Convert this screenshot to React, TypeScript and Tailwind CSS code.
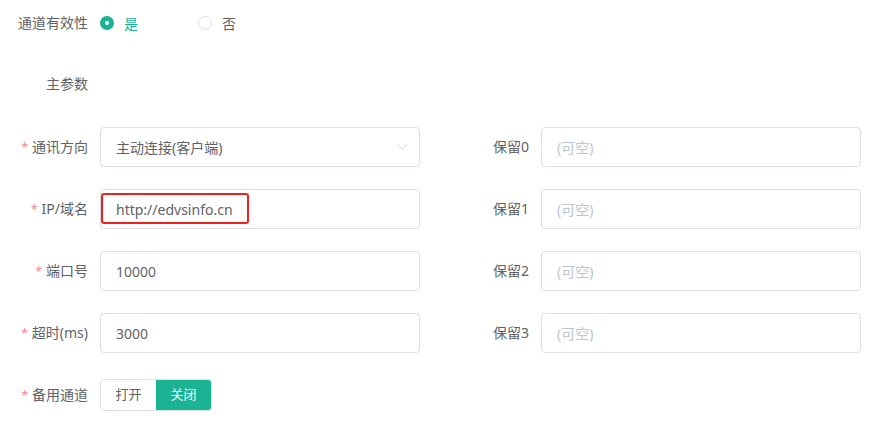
import { ChevronDown } from "lucide-react";

const font = { fontFamily: '"Noto Sans", "Noto Sans CJK SC", sans-serif' };

function Label({ text, required }: { text: string; required?: boolean }) {
  return (
    <div className="w-[100px] shrink-0 pr-3 text-right text-[14px] leading-5 text-[#606266]">
      {required && <span className="mr-[4px] text-[12px] text-[#f78989]">*</span>}
      {text}
    </div>
  );
}

function Field({ value, placeholder, highlight }: { value?: string; placeholder?: string; highlight?: boolean }) {
  return (
    <div className="relative flex h-10 w-[320px] items-center rounded border border-[#dcdfe6] bg-white px-[15px] text-[14px]">
      {value ? (
        <span className="text-[#606266]">{value}</span>
      ) : (
        <span className="text-[#c0c4cc]">{placeholder}</span>
      )}
      {highlight && (
        <div className="absolute left-0 top-[3px] h-[31px] w-[148px] rounded-[3px] border-2 border-[#f0201a]" />
      )}
    </div>
  );
}

function Row({ left, right }: { left: React.ReactNode; right?: React.ReactNode }) {
  return (
    <div className="flex h-10 items-center">
      <div className="flex w-[441px] items-center">{left}</div>
      {right && <div className="flex items-center">{right}</div>}
    </div>
  );
}

export default function App() {
  return (
    <div className="h-[425px] w-[869px] bg-white" style={font}>
      <div className="flex h-[46px] items-center">
        <Label text="通道有效性" />
        <div className="flex items-center">
          <span className="flex h-[14px] w-[14px] items-center justify-center rounded-full bg-[#1ab394]">
            <span className="h-1 w-1 rounded-full bg-white" />
          </span>
          <span className="ml-[10px] text-[14px] text-[#1ab394]">是</span>
        </div>
        <div className="ml-[60px] flex items-center">
          <span className="h-[14px] w-[14px] rounded-full border border-[#dcdfe6] bg-white" />
          <span className="ml-[10px] text-[14px] text-[#606266]">否</span>
        </div>
      </div>

      <div className="mt-[18px] flex h-10 items-center">
        <Label text="主参数" />
      </div>

      <div className="mt-[23px] flex flex-col gap-[22px]">
        <Row
          left={
            <>
              <Label text="通讯方向" required />
              <div className="flex h-10 w-[320px] items-center justify-between rounded border border-[#dcdfe6] bg-white pl-[15px] pr-[8px] text-[14px] text-[#606266]">
                <span>主动连接(客户端)</span>
                <ChevronDown size={18} strokeWidth={1} color="#c0c4cc" />
              </div>
            </>
          }
          right={
            <>
              <Label text="保留0" />
              <Field placeholder="(可空)" />
            </>
          }
        />
        <Row
          left={
            <>
              <Label text="IP/域名" required />
              <Field value="http://edvsinfo.cn" highlight />
            </>
          }
          right={
            <>
              <Label text="保留1" />
              <Field placeholder="(可空)" />
            </>
          }
        />
        <Row
          left={
            <>
              <Label text="端口号" required />
              <Field value="10000" />
            </>
          }
          right={
            <>
              <Label text="保留2" />
              <Field placeholder="(可空)" />
            </>
          }
        />
        <Row
          left={
            <>
              <Label text="超时(ms)" required />
              <Field value="3000" />
            </>
          }
          right={
            <>
              <Label text="保留3" />
              <Field placeholder="(可空)" />
            </>
          }
        />
        <Row
          left={
            <>
              <Label text="备用通道" required />
              <div className="flex h-8 overflow-hidden rounded border border-[#dcdfe6] text-[13px]">
                <span className="flex w-[55px] items-center justify-center bg-white text-[#606266]">打开</span>
                <span className="flex w-[55px] items-center justify-center bg-[#1ab394] text-white">关闭</span>
              </div>
            </>
          }
        />
      </div>
    </div>
  );
}
